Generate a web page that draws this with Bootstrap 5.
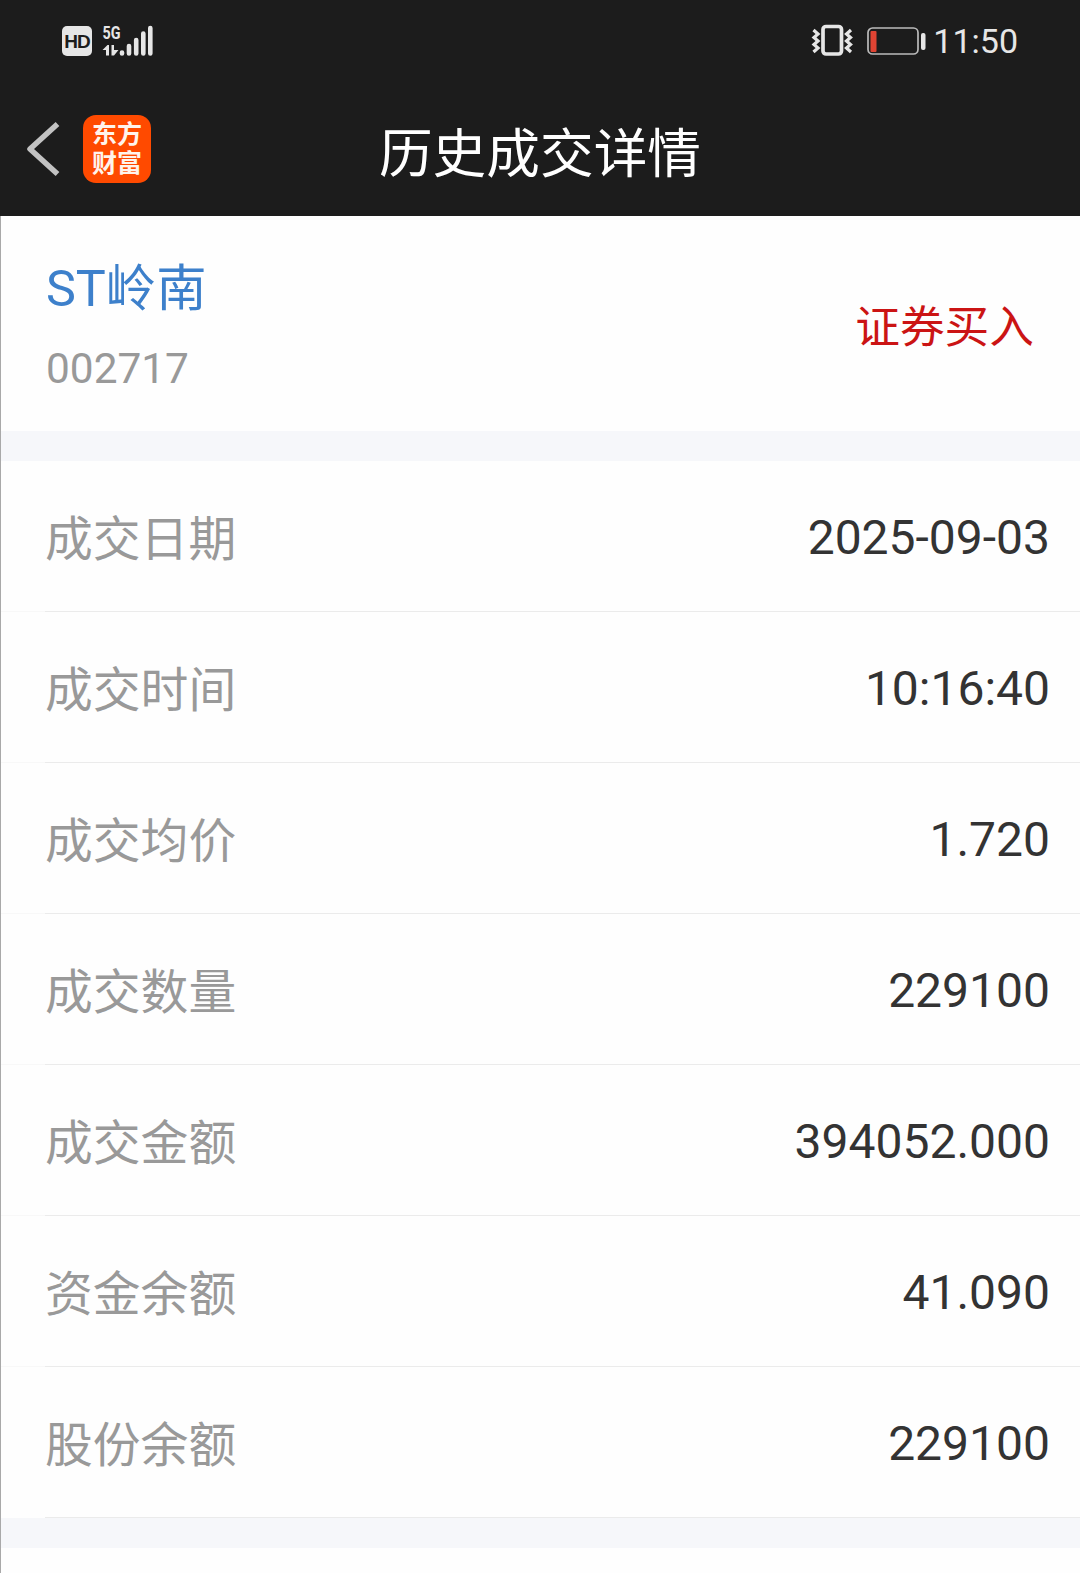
<!DOCTYPE html>
<html lang="zh-CN">
<head>
<meta charset="utf-8">
<meta name="viewport" content="width=device-width, initial-scale=1">
<title>历史成交详情</title>
<link rel="stylesheet" href="https://cdn.jsdelivr.net/npm/bootstrap@5.3.0/dist/css/bootstrap.min.css">
<style>
body{font-family:Roboto,"Noto Sans CJK SC",sans-serif;background:#fefefe;color:#333;overflow:hidden}
.screen{height:1573px;border-left:1px solid #a9a9a9}
.top-area{background:#1c1c1c;height:216px;margin-left:-1px}
.status-bar{height:82px;padding:0 62px 0 62px}
.hd-tag{width:30px;height:30px;border-radius:5px;background:#e6e6e6;color:#1c1c1c;font:700 19px/31px "Liberation Sans",sans-serif;letter-spacing:-1px}
.clock-text{font-size:34px;line-height:40px;color:#e6e6e6}
.title-bar{height:134px;padding:0 26px}
.title-side{width:200px;gap:23px}
.app-logo{width:68px;height:68px;border-radius:13px;background:#ff4a00;color:#fff4ec;font-weight:700;font-size:25px;line-height:29px}
.page-title{font-size:53.7px;line-height:60px;color:#fff;padding-top:12px}
.stock-head{height:215px;padding:0 46px 0 44px}
.stock-name{font-size:50.3px;line-height:58px;color:#3d80cb;padding-left:1px}
.stock-code{font-size:42.4px;line-height:50px;color:#999;margin-top:26px;padding-left:1px}
.stock-info{padding-top:6px}
.trade-side{font-size:44.7px;line-height:54px;color:#cb1414;padding-top:8px}
.divider-band{height:30px;background:#f6f7fa}
.detail-row{height:151px;padding:2px 30px 0 44px;font-size:48px;line-height:60px;background:linear-gradient(90deg,#f8f8f8 44px,#ebebeb 44px) bottom/100% 1px no-repeat}
.detail-row:last-child{background:linear-gradient(90deg,#fefefe 44px,#ebebeb 44px) bottom/100% 1px no-repeat}
.row-label{color:#999;font-size:47.8px;padding-top:4px}
</style>
</head>
<body>
<div class="screen d-flex flex-column">
  <header class="top-area flex-shrink-0">
    <div class="status-bar d-flex align-items-center justify-content-between">
      <div class="d-flex align-items-center">
        <span class="hd-tag text-center">HD</span>
        <svg class="ms-2" width="56" height="40" viewBox="0 0 56 40" fill="#e6e6e6">
          <text x="2.500" y="17.500" font-family="Roboto" font-weight="700" font-size="19" textLength="18" lengthAdjust="spacingAndGlyphs">5G</text>
          <path d="M2.500 29L7.500 24H9v10.500H6v-5.500zM11.500 24h2.500v5h4.500L14 34.500h-2.500z"/>
          <g stroke="#e6e6e6" stroke-width="4.600" stroke-linecap="round"><path d="M22 31.500v1M29 25v7.500M36.200 19v13.500M43.300 12.500v20M50.300 7v25.500"/></g>
        </svg>
      </div>
      <div class="d-flex align-items-center">
        <svg width="122" height="40" viewBox="0 0 122 40" fill="none" stroke="#e6e6e6">
          <rect x="12" y="5.500" width="18.500" height="27.500" rx="3" stroke-width="3.700"/>
          <path d="M2.500 9l4.500 4-4 3.500 4 3.500-4 3.500 4 3.500-4.500 4M40 9l-4.500 4 4 3.500-4 3.500 4 3.500-4 3.500 4.500 4" stroke-width="3.200"/>
          <rect x="57" y="7" width="50" height="26" rx="4.500" stroke-width="1.700" stroke="#bbb"/>
          <rect x="59.500" y="10" width="6" height="21" rx="1" fill="#e04433" stroke="none"/>
          <rect x="110" y="12" width="4.500" height="17" rx="2" fill="#e6e6e6" stroke="none"/>
        </svg>
        <span class="clock-text">11:50</span>
      </div>
    </div>
    <div class="title-bar d-flex align-items-center justify-content-between">
      <div class="title-side d-flex align-items-center">
        <svg width="34" height="56" viewBox="0 0 34 56" fill="none" stroke="#c2c2c2" stroke-width="5.500" stroke-linejoin="round"><path d="M31.500 3L4 28l27.500 25"/></svg>
        <div class="app-logo d-flex flex-column justify-content-center text-center"><span>东方</span><span>财富</span></div>
      </div>
      <h1 class="page-title fw-normal mb-0">历史成交详情</h1>
      <div class="title-side"></div>
    </div>
  </header>
  <main>
    <section class="stock-head d-flex align-items-center justify-content-between">
      <div class="stock-info">
        <div class="stock-name">ST岭南</div>
        <div class="stock-code">002717</div>
      </div>
      <div class="trade-side">证券买入</div>
    </section>
    <div class="divider-band"></div>
    <ul class="list-unstyled mb-0">
      <li class="detail-row d-flex align-items-center justify-content-between"><span class="row-label">成交日期</span><span>2025-09-03</span></li>
      <li class="detail-row d-flex align-items-center justify-content-between"><span class="row-label">成交时间</span><span>10:16:40</span></li>
      <li class="detail-row d-flex align-items-center justify-content-between"><span class="row-label">成交均价</span><span>1.720</span></li>
      <li class="detail-row d-flex align-items-center justify-content-between"><span class="row-label">成交数量</span><span>229100</span></li>
      <li class="detail-row d-flex align-items-center justify-content-between"><span class="row-label">成交金额</span><span>394052.000</span></li>
      <li class="detail-row d-flex align-items-center justify-content-between"><span class="row-label">资金余额</span><span>41.090</span></li>
      <li class="detail-row d-flex align-items-center justify-content-between"><span class="row-label">股份余额</span><span>229100</span></li>
    </ul>
    <div class="divider-band"></div>
  </main>
</div>
<script src="https://cdn.jsdelivr.net/npm/bootstrap@5.3.0/dist/js/bootstrap.bundle.min.js"></script>
</body>
</html>
